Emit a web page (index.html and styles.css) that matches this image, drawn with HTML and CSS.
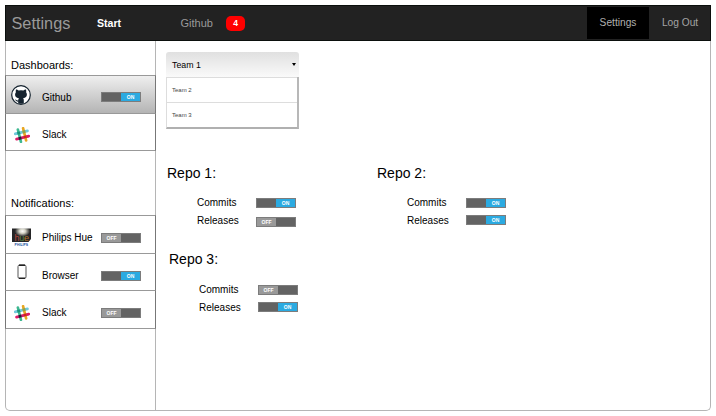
FILE: index.html
```
<!DOCTYPE html>
<html lang="en">
<head>
<meta charset="utf-8">
<title>Settings</title>
<link rel="stylesheet" href="styles.css">
</head>
<body>
<svg class="defs" width="0" height="0" aria-hidden="true">
  <symbol id="slack" viewBox="0 0 16 16">
    <g fill="none" stroke-width="2.7" stroke-linecap="round" transform="rotate(-14 8 8)">
      <path stroke="#70c9dc" d="M1.7 5.3H14.3"/>
      <path stroke="#e01765" d="M1.7 10.7H14.3"/>
      <path stroke="#3eb890" d="M5.3 1.7V14.3"/>
      <path stroke="#e8a723" d="M10.7 1.7V14.3"/>
      <g stroke-linecap="butt">
        <path stroke="#1a937d" d="M3.9 5.3H6.7"/>
        <path stroke="#8fa34c" d="M9.3 5.3H12.1"/>
        <path stroke="#361238" d="M3.9 10.7H6.7"/>
        <path stroke="#cc2027" d="M9.3 10.7H12.1"/>
      </g>
    </g>
  </symbol>
</svg>
<div class="window">
  <header class="navbar">
    <span class="brand">Settings</span>
    <a class="start">Start</a>
    <a class="github">Github</a>
    <span class="badge">4</span>
    <a class="tab active">Settings</a>
    <a class="tab logout">Log Out</a>
  </header>
  <div class="body">
    <aside class="sidebar">
      <h2>Dashboards:</h2>
      <ul class="dashboards">
        <li class="selected">
          <svg class="icon cat" viewBox="0 0 20 20"><circle cx="10" cy="10" r="9.3" fill="#fff" stroke="#15232f" stroke-width="1.2"/><path fill="#15232f" d="M5 4.4C6 4.4 7 5 7.7 5.5Q10 5 12.3 5.5C13 5 14 4.4 15 4.4Q15.5 6 15.1 7.2C17 10 15.4 13 12 13.2Q12.8 14 12.8 15V18.4Q10 19.3 7.2 18.4V16.6C5.2 17 5 15.5 3.8 14.6C5.5 14.4 5.8 15.8 7.2 15.4Q7.2 14 8 13.2C4.6 13 3 10 4.9 7.2Q4.5 6 5 4.4Z"/></svg>
          <span class="name">Github</span><span class="toggle on"><b>ON</b></span>
        </li>
        <li>
          <svg class="icon slack"><use href="#slack"/></svg>
          <span class="name">Slack</span>
        </li>
      </ul>
      <h2 class="second">Notifications:</h2>
      <ul class="notifications">
        <li>
          <svg class="icon hue" viewBox="0 0 19 19"><defs><radialGradient id="lamp" cx=".55" cy=".2" r=".4"><stop offset="0" stop-color="#fff"/><stop offset=".4" stop-color="#d4d3c6"/><stop offset="1" stop-color="#252526"/></radialGradient></defs><path fill="url(#lamp)" d="M0 .5H19V11L16.5 14H0Z"/><g class="hue-word"><text x="2.5" y="12.5" fill="#b8483c">h</text><text x="7.3" y="12.5" fill="#53844c">u</text><text x="12" y="12.5" fill="#b7762c">e</text></g><text class="philips" x="2.6" y="18" textLength="13.5">PHILIPS</text></svg>
          <span class="name">Philips Hue</span><span class="toggle off"><b>OFF</b></span>
        </li>
        <li class="browser">
          <svg class="icon phone" viewBox="0 0 10 16"><rect x="1" y="1" width="8" height="13.5" rx="1.6" fill="#fff" stroke="#555" stroke-width="1"/><path d="M2 1.2H8M2 14.2H8" stroke="#222" stroke-width="1.5"/></svg>
          <span class="name">Browser</span><span class="toggle on"><b>ON</b></span>
        </li>
        <li>
          <svg class="icon slack"><use href="#slack"/></svg>
          <span class="name">Slack</span><span class="toggle off"><b>OFF</b></span>
        </li>
      </ul>
    </aside>
    <main>
      <div class="select">
        <div class="current">Team 1<i class="caret"></i></div>
        <div class="options"><div>Team 2</div><div>Team 3</div></div>
      </div>
      <div class="repos">
        <section>
          <h3>Repo 1:</h3>
          <p>Commits<span class="toggle on"><b>ON</b></span></p>
          <p class="low">Releases<span class="toggle off"><b>OFF</b></span></p>
        </section>
        <section>
          <h3>Repo 2:</h3>
          <p>Commits<span class="toggle on"><b>ON</b></span></p>
          <p>Releases<span class="toggle on"><b>ON</b></span></p>
        </section>
        <section class="third">
          <h3>Repo 3:</h3>
          <p>Commits<span class="toggle off"><b>OFF</b></span></p>
          <p>Releases<span class="toggle on"><b>ON</b></span></p>
        </section>
      </div>
    </main>
  </div>
</div>
</body>
</html>
```
FILE: styles.css
```
* { box-sizing: border-box; }
body {
  margin: 0;
  padding: 5px;
  background: #fff;
  color: #000;
  font-family: "Liberation Sans", Arial, sans-serif;
}
.defs { display: block; }
h2, h3, p, ul { margin: 0; padding: 0; font-weight: normal; }
ul { list-style: none; }

.window {
  display: flex;
  flex-direction: column;
  width: 706px;
  height: 406px;
  border: 1px solid #b5b5b5;
  border-top: 0;
  border-radius: 0 0 5px 5px;
}

.navbar {
  display: flex;
  align-items: center;
  flex: none;
  height: 36px;
  margin: 0 -1px;
  background: #222;
  border: 1px solid #0b0f0d;
  color: #9a9a9a;
  font-size: 11px;
}
.brand { width: 91px; padding-left: 5.5px; font-size: 16.3px; }
.start { width: 83.5px; color: #fff; font-weight: bold; font-size: 10.6px; }
.github { width: 45.5px; }
.badge {
  width: 19px;
  height: 15px;
  margin-right: auto;
  border-radius: 5px;
  background: #f00;
  color: #fff;
  font-weight: bold;
  font-size: 8.5px;
  line-height: 15px;
  text-align: center;
}
.tab {
  width: 62px;
  height: 32px;
  line-height: 32px;
  font-size: 10.2px;
  text-align: center;
  color: #b0b0b0;
}
.active { background: #000; }
.logout { width: 61px; padding-left: 1px; color: #a4a4a4; }

.body { display: flex; flex: 1; min-height: 0; }
.sidebar { width: 150px; flex: none; border-right: 1px solid #b5b5b5; }
.sidebar h2 {
  height: 34px;
  padding: 17px 0 0 5px;
  font-size: 11px;
  line-height: 14px;
}
.sidebar .second { padding-top: 15px; }
.dashboards { margin-bottom: 30px; }
.sidebar li {
  display: flex;
  align-items: center;
  height: 37.5px;
  margin: 0 -1px;
  padding-top: 6px;
  border-top: 1px solid #999;
  border-left: 1px solid #777;
  border-right: 1px solid #777;
  font-size: 10px;
}
.sidebar li:last-child { height: 38.5px; border-bottom: 1px solid #999; }
.sidebar .selected { background: linear-gradient(#efefef, #b4b4b4); }
.icon { flex: none; display: block; }
.cat { width: 20px; height: 20px; margin: -4px 11px 0 5px; }
.slack { width: 16px; height: 16px; margin: 0 12px 0 8px; }
.hue { width: 19px; height: 19px; margin: -1px 11px 0 6px; }
.phone { width: 10px; height: 16px; margin: -6px 15px 0 11px; }
.name { width: 59px; white-space: nowrap; }
.sidebar .notifications li { padding-top: 7px; }
.browser .toggle { margin-top: 2px; }
.hue-word { font-size: 9px; }
.philips { font-size: 3.4px; font-weight: bold; fill: #164b9c; }

.toggle {
  display: flex;
  flex: none;
  width: 40px;
  height: 10px;
  border: 1px solid #7c7c7c;
  background: #636363;
}
.toggle b {
  width: 19px;
  background: #999;
  color: #fff;
  font-size: 5px;
  line-height: 8px;
  text-align: center;
}
.on { justify-content: flex-end; }
.on b { background: #2baae1; }

main { flex: 1; padding: 11px 0 0 10px; }
.select { width: 133px; height: 77px; }
.current {
  display: flex;
  align-items: center;
  justify-content: space-between;
  height: 25px;
  padding: 0 3px 0 6px;
  border-radius: 3px 3px 0 0;
  background: linear-gradient(#e0e0e0, #fafafa);
  font-size: 8.8px;
}
.caret {
  border: 2.5px solid transparent;
  border-top: 3px solid #000;
  border-bottom: 0;
}
.options {
  border: 1px solid #ddd;
  border-top: 0;
  border-right: 2px solid #b8b8b8;
  border-bottom: 2px solid #b0b0b0;
}
.options div {
  height: 25px;
  padding-left: 5px;
  border-top: 1px solid #ddd;
  color: #444;
  font-size: 6px;
  line-height: 24px;
}

.repos {
  display: grid;
  grid-template-columns: 210px 150px;
  grid-template-rows: 86px 86px;
  margin-top: 36px;
  padding-left: 1px;
}
.repos h3 { height: 29px; font-size: 14px; line-height: 17px; }
.repos p {
  display: flex;
  align-items: center;
  justify-content: space-between;
  width: 99px;
  height: 17.5px;
  margin-left: 30px;
  font-size: 10px;
}
.low .toggle { margin-top: 4px; }
.third { padding-left: 2px; }
.third p { position: relative; top: 1px; }
```
